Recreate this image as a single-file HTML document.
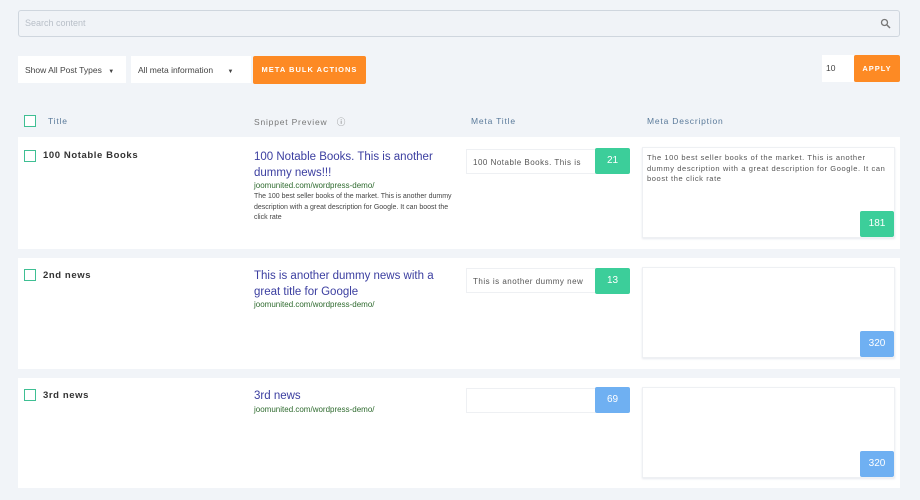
<!DOCTYPE html>
<html><head><meta charset="utf-8"><style>
*{box-sizing:border-box;margin:0;padding:0}
body{width:920px;height:500px;background:#f1f4f8;font-family:"Liberation Sans",sans-serif;position:relative;overflow:hidden}
.a{position:absolute}
.search{left:18px;top:10px;width:882px;height:27px;border:1px solid #cfd6de;border-radius:3px;background:#f0f3f7;font-size:9px;color:#b8bfc8;padding:7px 6px}
.sel{background:#fff;height:27px;font-size:8.5px;color:#444;padding:9px 7px;white-space:nowrap}
.btn{background:#fd8a24;color:#fff;font-size:7.5px;font-weight:bold;letter-spacing:1px;text-align:center;border-radius:2px}
.hd{font-size:8.5px;color:#5a7a9a;letter-spacing:.8px;top:116px}
.row{left:18px;width:882px;background:#fff}
.cb{width:12px;height:12px;border:1.5px solid #3fbf93;background:#fff}
.t{font-size:9.5px;font-weight:bold;color:#333;letter-spacing:.6px}
.sp{font-size:11.5px;color:#3b3ea0;line-height:16px;width:200px}
.url{font-size:8px;color:#2f6b2f}
.sd{font-size:7px;color:#444;line-height:10.5px;width:205px}
.mt{background:#fff;border:1px solid #eef0f3;height:25px;width:130px;font-size:8px;color:#555;padding:8px 6px;letter-spacing:.5px;white-space:nowrap;overflow:hidden}
.bd{color:#fff;font-size:10px;text-align:center;border-radius:2px}
.g{background:#3cce9a}.b{background:#6fb0f2}
.md{background:#fff;border:1px solid #eef0f3;box-shadow:0 1px 2px #e6e9ee;width:253px;height:91px;font-size:7.5px;color:#555;line-height:10.5px;padding:5px 4px;letter-spacing:.6px}
</style></head><body>
<div class="a search">Search content</div>
<svg class="a" style="left:880px;top:18px" width="11" height="11" viewBox="0 0 11 11"><circle cx="4.5" cy="4.5" r="3" fill="none" stroke="#777" stroke-width="1.3"/><line x1="7" y1="7" x2="10" y2="10" stroke="#777" stroke-width="1.5"/></svg>
<div class="a sel" style="left:18px;top:56px;width:108px">Show All Post Types <span style="margin-left:4px;font-size:6px">▼</span></div>
<div class="a sel" style="left:131px;top:56px;width:120px">All meta information <span style="margin-left:12px;font-size:6px">▼</span></div>
<div class="a btn" style="left:253px;top:56px;width:113px;height:28px;line-height:28px">META BULK ACTIONS</div>
<div class="a sel" style="left:822px;top:55px;width:32px;height:27px;padding:8px 4px">10</div>
<div class="a btn" style="left:854px;top:55px;width:46px;height:27px;line-height:27px">APPLY</div>
<div class="a cb" style="left:24px;top:115px"></div>
<div class="a hd" style="left:48px">Title</div>
<div class="a hd" style="left:254px;color:#777">Snippet Preview &nbsp;&nbsp;ⓘ</div>
<div class="a hd" style="left:471px">Meta Title</div>
<div class="a hd" style="left:647px">Meta Description</div>

<div class="a row" style="top:137px;height:112px"></div>
<div class="a cb" style="left:24px;top:150px"></div>
<div class="a t" style="left:43px;top:150px">100 Notable Books</div>
<div class="a sp" style="left:254px;top:149px">100 Notable Books. This is another dummy news!!!</div>
<div class="a url" style="left:254px;top:181px">joomunited.com/wordpress-demo/</div>
<div class="a sd" style="left:254px;top:192px">The 100 best seller books of the market. This is another dummy description with a great description for Google. It can boost the click rate</div>
<div class="a mt" style="left:466px;top:149px">100 Notable Books. This is</div>
<div class="a bd g" style="left:595px;top:148px;width:35px;height:26px;line-height:26px">21</div>
<div class="a md" style="left:642px;top:147px">The 100 best seller books of the market. This is another dummy description with a great description for Google. It can boost the click rate</div>
<div class="a bd g" style="left:860px;top:211px;width:34px;height:26px;line-height:26px">181</div>

<div class="a row" style="top:258px;height:111px"></div>
<div class="a cb" style="left:24px;top:269px"></div>
<div class="a t" style="left:43px;top:270px">2nd news</div>
<div class="a sp" style="left:254px;top:268px">This is another dummy news with a great title for Google</div>
<div class="a url" style="left:254px;top:300px">joomunited.com/wordpress-demo/</div>
<div class="a mt" style="left:466px;top:268px">This is another dummy new</div>
<div class="a bd g" style="left:595px;top:268px;width:35px;height:26px;line-height:26px">13</div>
<div class="a md" style="left:642px;top:267px"></div>
<div class="a bd b" style="left:860px;top:331px;width:34px;height:26px;line-height:26px">320</div>

<div class="a row" style="top:378px;height:110px"></div>
<div class="a cb" style="left:24px;top:389px"></div>
<div class="a t" style="left:43px;top:390px">3rd news</div>
<div class="a sp" style="left:254px;top:388px">3rd news</div>
<div class="a url" style="left:254px;top:405px">joomunited.com/wordpress-demo/</div>
<div class="a mt" style="left:466px;top:388px"></div>
<div class="a bd b" style="left:595px;top:387px;width:35px;height:26px;line-height:26px">69</div>
<div class="a md" style="left:642px;top:387px"></div>
<div class="a bd b" style="left:860px;top:451px;width:34px;height:26px;line-height:26px">320</div>
</body></html>
